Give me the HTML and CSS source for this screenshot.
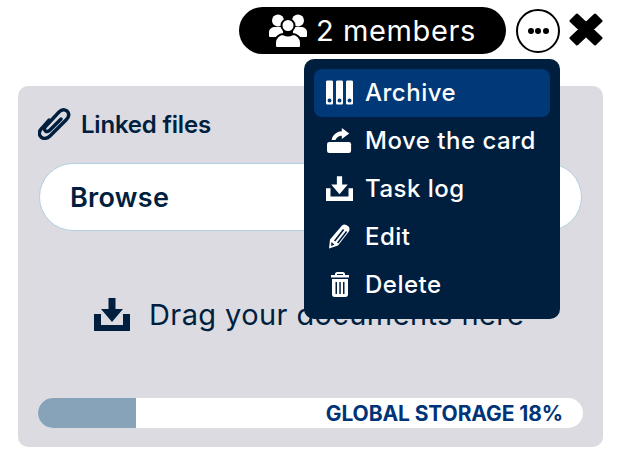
FILE: index.html
```html
<!DOCTYPE html>
<html lang="en">
<head>
    <meta charset="UTF-8">
    <title>Linked files</title>
    <link rel="stylesheet" href="styles.css">
</head>
<body>
    <div class="card-window">
        <div class="top-bar">
            <div class="members">
                <svg class="members-icon" viewBox="0 0 38 34" fill="#fff">
                    <circle cx="9" cy="6.500" r="6"/>
                    <circle cx="29" cy="6.500" r="6"/>
                    <path d="M0 22v-4c0-3 3-5 6-5h8v10H2c-1 0-2 0-2-1z"/>
                    <path d="M38 22v-4c0-3-3-5-6-5h-8v10h12c1 0 2 0 2-1z"/>
                    <circle cx="19" cy="11.500" r="6.500" stroke="#000" stroke-width="2"/>
                    <path d="M8 34c-1 0-2-1-2-2v-3c0-6 5-9 8-9 2 1 3 1.500 5 1.500s3-.5 5-1.500c3 0 8 3 8 9v3c0 1-1 2-2 2z" stroke="#000" stroke-width="2"/>
                </svg>
                <span>2 members</span>
            </div>
            <button class="more-btn"><span></span><span></span><span></span></button>
            <svg class="close-icon" viewBox="0 0 34 33" fill="#000" stroke="#000" stroke-width="3" stroke-linejoin="round">
                <path d="M8 2 17 10.500 26 2 32 8 23 16.500 32 25 26 31 17 22.500 8 31 2 25 11 16.500 2 8z"/>
            </svg>
        </div>

        <div class="panel">
            <div class="panel-title">
                <svg class="clip-icon" viewBox="1 0 33 32" fill="none" stroke="#001f3f" stroke-width="3.400" stroke-linecap="round" stroke-linejoin="round">
                    <path d="M12 12 5 20c-4 4-3 7-1 9s6 2 9-1L29 12c3-3 4-6 1-9-3-2-6-1-8 1L9 18c-2 2-2 4-.5 5s3 .5 4.500-1L24 11"/>
                </svg>
                <span>Linked files</span>
            </div>
            <div class="browse">Browse</div>
            <div class="drop-zone">
                <svg class="drop-icon" viewBox="0 0 36 33" fill="#001f3f">
                    <path d="M14.500 0h7v11H29L18 24 7 11h7.500z"/>
                    <path d="M0 16h7v11h22V16h7v17H0z"/>
                </svg>
                <span>Drag your documents here</span>
            </div>
            <div class="storage">
                <div class="storage-fill"></div>
                <span class="storage-label">GLOBAL STORAGE 18%</span>
            </div>
        </div>

        <ul class="menu">
            <li class="menu-item active">
                <svg class="menu-icon" viewBox="0 0 27 24" fill="#fff">
                    <path fill-rule="evenodd" d="M1.500 0h4c1 0 1.500.5 1.500 1.500v21c0 1-.5 1.500-1.500 1.500h-4C.5 24 0 23.500 0 22.500v-21C0 .5.500 0 1.500 0zm2 18a2 2 0 1 0 0 4 2 2 0 0 0 0-4z"/>
                    <path fill-rule="evenodd" d="M11.500 0h4c1 0 1.500.5 1.500 1.500v21c0 1-.5 1.500-1.500 1.500h-4c-1 0-1.500-.5-1.500-1.500v-21c0-1 .5-1.500 1.500-1.500zm2 18a2 2 0 1 0 0 4 2 2 0 0 0 0-4z"/>
                    <path fill-rule="evenodd" d="M21.500 0h4c1 0 1.500.5 1.500 1.500v21c0 1-.5 1.500-1.500 1.500h-4c-1 0-1.500-.5-1.500-1.500v-21c0-1 .5-1.500 1.500-1.500zm2 18a2 2 0 1 0 0 4 2 2 0 0 0 0-4z"/>
                </svg>
                <span>Archive</span>
            </li>
            <li class="menu-item">
                <svg class="menu-icon" viewBox="0 0 27 27" fill="#fff">
                    <path d="M16 0l8 6-8 6V8.500c-3 0-5 1.500-7 4.500H5c1-5.500 5-9 11-9.500z"/>
                    <rect x="0" y="15" width="26" height="12" rx="2.500"/>
                </svg>
                <span>Move the card</span>
            </li>
            <li class="menu-item">
                <svg class="menu-icon" viewBox="0 0 36 33" fill="#fff">
                    <path d="M14.500 0h7v11H29L18 24 7 11h7.500z"/>
                    <path d="M0 16h6v11h24V16h6v17H0z"/>
                </svg>
                <span>Task log</span>
            </li>
            <li class="menu-item">
                <svg class="menu-icon" viewBox="-3 0 27 24" fill="#fff">
                    <path fill-rule="evenodd" d="M13 1c2-1.500 4-1 6 .5s2 4 .5 6L9 21 0 24l1-9zM2.500 17.500 2 21.500l3.500-1.200zM14 4.500 5 16l1.300 1L15.300 5.500zM17 6.500 8 18l1.300 1L18.300 7.500z"/>
                </svg>
                <span>Edit</span>
            </li>
            <li class="menu-item">
                <svg class="menu-icon" viewBox="-4 0 27 25" fill="#fff">
                    <path d="M7 0h6c1 0 2 1 2 2v1h4v2.500H1V3h4V2c0-1 1-2 2-2zm0 2v1h6V2z" fill-rule="evenodd"/>
                    <path fill-rule="evenodd" d="M2 7h16v15.500c0 1.500-1 2.500-2.500 2.500h-11C3 25 2 24 2 22.500zm3.500 3v12h1.500V10zm3.800 0v12h1.500V10zm3.700 0v12h1.500V10z"/>
                </svg>
                <span>Delete</span>
            </li>
        </ul>
    </div>
</body>
</html>
```

FILE: styles.css
```css
* {
    box-sizing: border-box;
}
body {
    margin: 0;
    background-color: #fff;
    font-family: "Inter", "Liberation Sans", sans-serif;
    color: #001f3f;
}
.card-window {
    position: relative;
    width: 620px;
    height: 466px;
    overflow: hidden;
    padding: 7px 17px 0 18px;
}
.top-bar {
    display: flex;
    justify-content: flex-end;
    align-items: center;
    height: 47px;
}
.members {
    display: flex;
    align-items: center;
    justify-content: center;
    gap: 9px;
    width: 267px;
    height: 47px;
    border-radius: 24px;
    background-color: #000;
    color: #fff;
    font-size: 29px;
    letter-spacing: 0.6px;
}
.members-icon {
    width: 38px;
    height: 34px;
}
.more-btn {
    display: flex;
    align-items: center;
    justify-content: center;
    gap: 1.5px;
    width: 44px;
    height: 44px;
    margin-left: 10px;
    padding: 0;
    border: 2px solid #000;
    border-radius: 50%;
    background-color: #fff;
}
.more-btn span {
    width: 6px;
    height: 6px;
    border-radius: 50%;
    background-color: #000;
}
.close-icon {
    width: 34px;
    height: 33px;
    margin: 0 0 3px 9px;
}
.panel {
    display: flex;
    flex-direction: column;
    height: 361px;
    margin-top: 32px;
    padding: 21px 20px 19px;
    border-radius: 10px;
    background-color: #dbdbe1;
}
.panel-title {
    display: flex;
    align-items: center;
    gap: 10px;
    height: 34px;
    font-size: 24px;
    font-weight: 600;
    letter-spacing: -0.2px;
}
.clip-icon {
    width: 33px;
    height: 32px;
}
.browse {
    display: flex;
    align-items: center;
    height: 68px;
    margin: 22px 1px 0;
    padding-left: 30px;
    border: 1px solid #b3cfe3;
    border-radius: 34px;
    background-color: #fff;
    font-size: 27px;
    font-weight: 600;
    letter-spacing: 0.3px;
}
.drop-zone {
    display: flex;
    align-items: center;
    gap: 19px;
    margin: 66px 0 0 56px;
    font-size: 29px;
    letter-spacing: 0.4px;
}
.drop-icon {
    width: 36px;
    height: 33px;
}
.storage {
    display: flex;
    justify-content: flex-end;
    align-items: center;
    height: 30px;
    margin-top: auto;
    padding-right: 20px;
    border-radius: 15px;
    overflow: hidden;
    position: relative;
    background-color: #fff;
}
.storage-fill {
    position: absolute;
    left: 0;
    top: 0;
    bottom: 0;
    width: 18%;
    background-color: #87a3b9;
}
.storage-label {
    color: #003478;
    font-size: 21px;
    font-weight: 700;
    letter-spacing: -0.1px;
}
.menu {
    position: absolute;
    left: 304px;
    top: 59px;
    width: 256px;
    margin: 0;
    padding: 10px;
    border-radius: 10px;
    background-color: #001f3f;
    list-style: none;
}
.menu-item {
    display: flex;
    align-items: center;
    height: 48px;
    padding: 0 0 2px 12px;
    border-radius: 8px;
    color: #fff;
    font-size: 24px;
    font-weight: 500;
    letter-spacing: 0.5px;
}
.menu-item.active {
    background-color: #003878;
}
.menu-icon {
    width: 27px;
    height: 25px;
    margin-right: 12px;
    flex-shrink: 0;
}
```
